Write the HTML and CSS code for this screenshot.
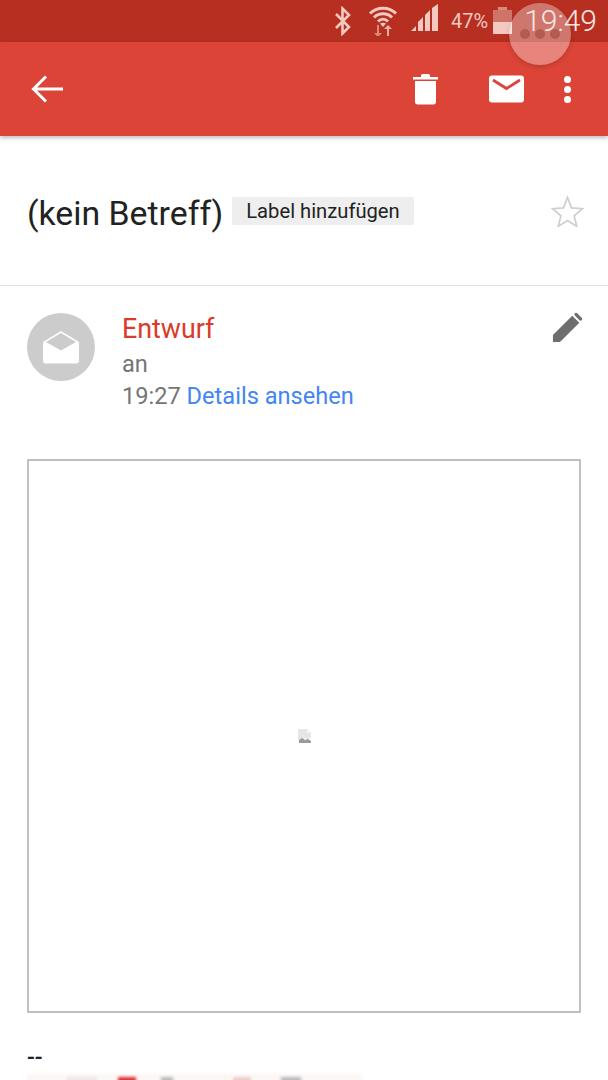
FILE: index.html
```html
<!DOCTYPE html>
<html lang="de">
<head>
    <meta charset="UTF-8">
    <title>Entwurf</title>
    <link rel="stylesheet" href="styles.css">
</head>
<body>
    <div class="phone">
        <div class="statusbar">
            <svg class="st-bt" width="20" height="30" viewBox="0 0 20 30"><path d="M3 8l13 13-6.500 6.500V2.500L16 9 3 22" fill="none" stroke="#f3c9c2" stroke-width="2.600"/></svg>
            <svg class="st-wifi" width="30" height="32" viewBox="0 0 30 32">
                <path d="M2 9.500C9 2.500 21 2.500 28 9.500M6 13.500c5-5 13-5 18 0M10 17.500c3-3 7-3 10 0" fill="none" stroke="#f3c9c2" stroke-width="3"/>
                <path d="M15 23l-3-3.500c2-1 4-1 6 0z" fill="#f3c9c2"/>
                <path d="M9 21v8H6l4 4 4-4h-3v-8z" fill="#d98a7f"/>
                <path d="M19 33v-8h-3l4-4 4 4h-3v8z" fill="#e8b0a6"/>
            </svg>
            <svg class="st-signal" width="28" height="28" viewBox="0 0 28 28">
                <path d="M0 27l5-5v5zM7 27v-9l5-5v14zM14 27V11l5-5v21zM21 27V4l6-4v27z" fill="#f3c9c2"/>
            </svg>
            <span class="st-pct">47%</span>
            <div class="st-battery"><span class="st-cap"></span><span class="st-empty"></span><span class="st-full"></span></div>
            <span class="st-time">19:49</span>
        </div>

        <div class="toolbar">
            <svg class="back" width="32" height="32" viewBox="0 0 32 32"><path d="M32 16H3M15 3.500L2.500 16 15 28.500" fill="none" stroke="#fff" stroke-width="3"/></svg>
            <div class="tb-actions">
                <svg class="trash" width="25" height="31" viewBox="0 0 25 31"><path d="M0 3h8V1.500C8 .5 9 0 10 0h5c1 0 2 .5 2 1.500V3h8v2.500H0zM2 7h21v21c0 1.500-1 2.500-2.500 2.500h-16C3 30.500 2 29.500 2 28z" fill="#fff"/></svg>
                <svg class="mail" width="35" height="28" viewBox="0 0 35 28"><rect width="35" height="27" y=".5" rx="3" fill="#fff"/><path d="M4 5l13.500 8.500L31 5" fill="none" stroke="#db4437" stroke-width="2.800"/></svg>
                <div class="dots"><i></i><i></i><i></i></div>
            </div>
        </div>

        <div class="subject">
            <h1>(kein Betreff)</h1>
            <span class="chip">Label hinzufügen</span>
            <svg class="star" width="33" height="32" viewBox="0 0 34 32"><path d="M17 2l4.200 10.800 11.300.8-8.700 7.300 2.800 11-9.600-6.100-9.600 6.100 2.800-11L1.500 13.600l11.300-.8z" fill="none" stroke="#cfcfcf" stroke-width="1.800"/></svg>
        </div>

        <div class="sender">
            <div class="avatar">
                <svg width="36" height="34" viewBox="0 0 36 34"><path d="M0 12L18 1l18 11v19c0 1.500-1 2.500-2.500 2.500h-31C1 33.500 0 32.500 0 31z" fill="#fff"/><path d="M3 12L18 3l15 9-15 8.500z" fill="#ccc"/></svg>
            </div>
            <div class="sender-text">
                <div class="sender-name">Entwurf</div>
                <div class="sender-line">an</div>
                <div class="sender-line">19:27 <span class="details">Details ansehen</span></div>
            </div>
            <svg class="pencil" width="32" height="32" viewBox="0 0 34 34"><path d="M1 25.500L21.500 5l7.500 7.500L8.500 33H1zM24 2.500c.8-.8 2-.8 2.800 0l4.700 4.700c.8.800.8 2 0 2.800L29.500 10 24 4.500z" fill="#6e6e6e"/></svg>
        </div>

        <div class="message">
            <div class="image-box">
                <svg width="14" height="15" viewBox="0 0 14 15"><path d="M0 0h9l4 4v4l-3 3-3-2-4 3-3-1z" fill="#e3e7ec"/><path d="M1 14V11l3-2 3 2 3-1 3 2v2z" fill="#9a9a9a"/><path d="M9 0l4 4H9z" fill="#f4f4f4"/></svg>
            </div>
            <div class="sig-dash">--</div>
            <div class="sig-blur"><span class="b1"></span><span class="b2"></span><span class="b3"></span><span class="b4"></span><span class="b5"></span></div>
        </div>

        <div class="touch"><i></i><i></i><i></i></div>
    </div>
</body>
</html>
```

FILE: styles.css
```css
html, body {
    margin: 0;
    background: #fff;
}

.phone {
    position: relative;
    width: 608px;
    height: 1080px;
    overflow: hidden;
    font-family: 'Roboto', sans-serif;
    color: #222;
}

/* status bar */
.statusbar {
    height: 42px;
    background-color: #b62f20;
    display: flex;
    align-items: center;
    padding-right: 11px;
    justify-content: flex-end;
    color: #f3c9c2;
    box-sizing: border-box;
}

.st-bt { margin-right: 15px; }
.st-wifi { margin-right: 13px; align-self: flex-start; margin-top: 4px; }
.st-signal { margin-right: 12px; margin-top: -6px; }

.st-pct {
    font-size: 20px;
    margin-right: 5px;
    margin-top: -1px;
}

.st-battery {
    width: 19px;
    height: 27px;
    margin-right: 12px;
    margin-top: -1px;
    display: flex;
    flex-direction: column;
    align-items: center;
}

.st-cap { width: 9px; height: 3px; background: #d98a7f; }
.st-empty { width: 19px; height: 12px; background: #cf7568; }
.st-full { width: 19px; height: 12px; background: #f3c9c2; }

.st-time {
    font-size: 30px;
    font-weight: 300;
    color: #fae6e2;
    position: relative;
    z-index: 2;
    margin-top: -2px;
}

/* toolbar */
.toolbar {
    height: 94px;
    background-color: #db4437;
    box-shadow: 0 2px 4px rgba(0,0,0,0.25);
    display: flex;
    align-items: center;
    justify-content: space-between;
    padding: 0 37px 0 31px;
    position: relative;
}

.tb-actions {
    display: flex;
    align-items: center;
}

.trash { margin-right: 51px; }
.mail { margin-right: 40px; }

.dots {
    display: flex;
    flex-direction: column;
    gap: 3px;
}

.dots i {
    display: block;
    width: 7px;
    height: 7px;
    border-radius: 50%;
    background: #fff;
}

/* subject */
.subject {
    height: 149px;
    border-bottom: 1px solid #e2e2e2;
    display: flex;
    align-items: center;
    padding: 0 24px 0 27px;
}

.subject h1 {
    margin: 5px 9px 0 0;
    font-size: 33.800px;
    font-weight: 400;
    color: #222;
}

.chip {
    background-color: #eeeeee;
    border-radius: 2px;
    padding: 0 14px;
    height: 28px;
    line-height: 28px;
    font-size: 20.200px;
    color: #222;
}

.star { margin-left: auto; }

/* sender */
.sender {
    display: flex;
    padding: 27px 24px 0 27px;
    height: 173px;
    box-sizing: border-box;
}

.avatar {
    width: 68px;
    height: 68px;
    border-radius: 50%;
    background-color: #cccccc;
    display: flex;
    align-items: center;
    justify-content: center;
    margin-right: 27px;
    flex-shrink: 0;
}

.sender-name {
    color: #db3a2c;
    font-size: 26.800px;
    line-height: 32px;
}

.sender-line {
    color: #757575;
    font-size: 23.600px;
    line-height: 33px;
}

.sender-line:nth-child(2) { margin-top: 3px; }
.sender-line:nth-child(3) { margin-top: -1px; }

.details { color: #4285f4; }

.pencil { margin-left: auto; margin-top: -2px; }

/* message body */
.message { padding: 0 27px; }

.image-box {
    width: 554px;
    height: 554px;
    border: 2px solid #c0c0c0;
    box-sizing: border-box;
    display: flex;
    align-items: center;
    justify-content: center;
}

.image-box svg { margin-left: 2px; }

.sig-dash {
    font-size: 23px;
    font-weight: 500;
    line-height: 24px;
    margin-top: 33px;
    color: #222;
}

.sig-blur {
    margin-top: 4px;
    width: 335px;
    height: 8px;
    background: #fcf6f5;
    display: flex;
    padding: 3px 0 0 40px;
    box-sizing: border-box;
    filter: blur(1.500px);
}

.sig-blur span { display: block; height: 6px; background: #ddd; }
.sig-blur .b1 { width: 30px; background: #f0e8e6; margin-right: 21px; }
.sig-blur .b2 { width: 18px; background: #d33; margin-right: 25px; }
.sig-blur .b3 { width: 12px; background: #bbb; margin-right: 60px; }
.sig-blur .b4 { width: 18px; background: #eecfc9; margin-right: 30px; }
.sig-blur .b5 { width: 20px; background: #bbb; }

/* touch indicator on top of the status bar */
.touch {
    position: absolute;
    left: 509px;
    top: 3px;
    width: 62px;
    height: 62px;
    border-radius: 50%;
    background: rgba(255,255,255,0.35);
    box-shadow: 0 2px 4px rgba(0,0,0,0.15);
    display: flex;
    align-items: center;
    justify-content: center;
    gap: 5px;
}

.touch i {
    width: 10px;
    height: 10px;
    border-radius: 50%;
    background: rgba(130,40,30,0.35);
}
```
